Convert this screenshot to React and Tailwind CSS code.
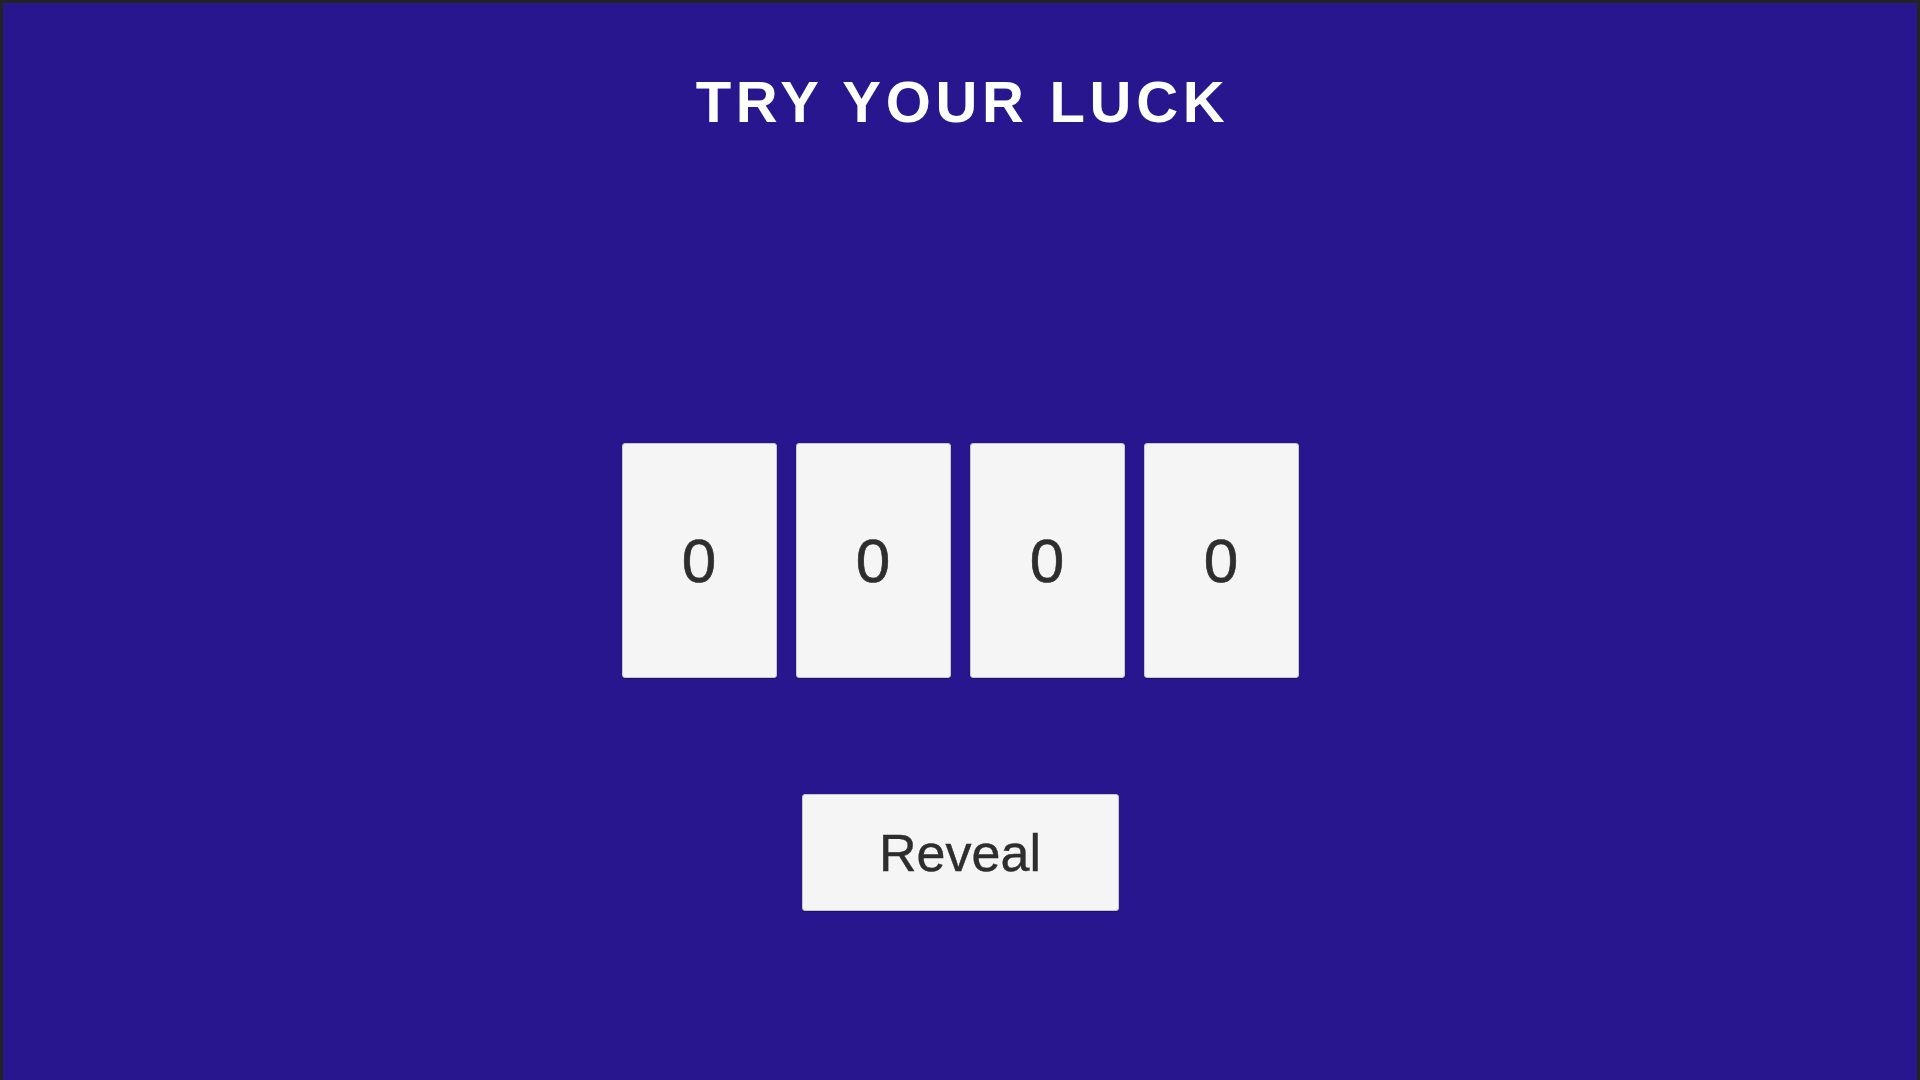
export default function App() {
  const digits = ["0", "0", "0", "0"];
  return (
    <div
      className="w-[1920px] h-[1080px] box-border border-t-[3px] border-l-[3px] border-r-[3px] border-b-0 border-[#232323] bg-[#28168f] flex flex-col items-center overflow-hidden"
      style={{ fontFamily: '"Liberation Sans", Arial, sans-serif' }}
    >
      <h1 className="mt-[70px] ml-[5px] text-[58px] leading-none font-bold tracking-[4.7px] text-white">
        TRY YOUR LUCK
      </h1>
      <div className="mt-[312px] flex gap-[19px]">
        {digits.map((d, i) => (
          <div
            key={i}
            className="w-[155px] h-[235px] bg-[#f5f5f5] rounded-[3px] border border-[#c8c8c8] shadow-[0_1px_1px_rgba(0,0,0,0.25)] flex items-center justify-center text-[62px] leading-none text-[#2e2e2e] [-webkit-text-stroke:0.6px_#2e2e2e]"
          >
            {d}
          </div>
        ))}
      </div>
      <button className="mt-[116px] w-[317px] h-[117px] bg-[#f5f5f5] rounded-[3px] border border-[#c8c8c8] shadow-[0_1px_1px_rgba(0,0,0,0.25)] flex items-center justify-center text-[52px] leading-none text-[#2e2e2e] [-webkit-text-stroke:0.4px_#2e2e2e]">
        Reveal
      </button>
    </div>
  );
}
